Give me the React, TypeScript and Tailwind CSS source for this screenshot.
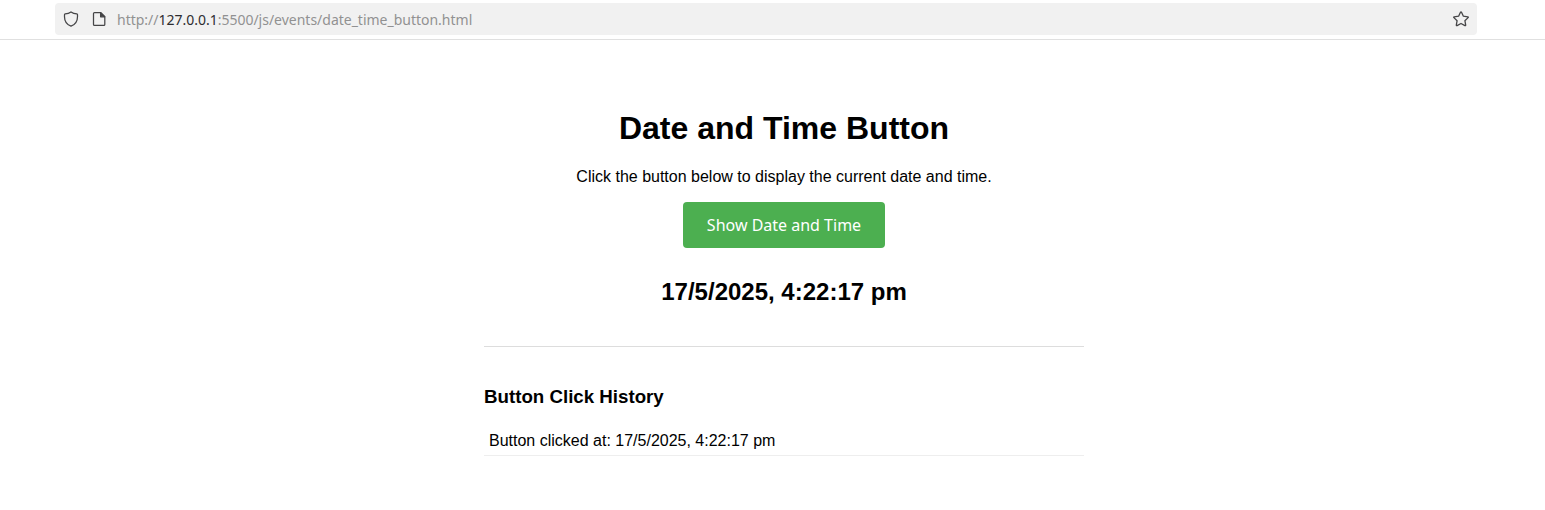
export default function App() {
  return (
    <div className="h-[510px] bg-white font-['Liberation_Sans',Arial,sans-serif] text-base text-black">
      <header className="h-10 border-b border-[#e0e0e0] pt-[3px] pr-[68px] pl-[55px]">
        <div className="flex h-8 items-center rounded bg-[#f1f1f1] px-2 text-[#454547]">
          <svg width="16" height="16" viewBox="0 0 16 16" fill="none" stroke="currentColor" strokeWidth="1.25" strokeLinejoin="round">
            <path d="M8 .9C6.200 2.100 4 2.700 2.200 2.900a.8.8 0 0 0-.7.8v2.100c0 4.300 2.800 8 6.500 9.400 3.700-1.400 6.500-5.100 6.500-9.400V3.700a.8.8 0 0 0-.7-.8C12 2.700 9.800 2.100 8 .9Z" />
          </svg>
          <svg className="ml-3" width="16" height="16" viewBox="0 0 16 16" fill="none" stroke="currentColor" strokeWidth="1.25" strokeLinejoin="round">
            <path d="M3.500 1.600h6.300l4 4v7.800a1 1 0 0 1-1 1H3.500a1 1 0 0 1-1-1V2.600a1 1 0 0 1 1-1Z" />
            <path d="M9.600 1.700v4.100h4.100Z" fill="currentColor" />
          </svg>
          <span className="ml-[10px] font-['Noto_Sans',sans-serif] text-[14px] tracking-[-0.01px] text-[#919192]">
            http://<span className="text-[#2d2d30]">127.0.0.1</span>:5500/js/events/date_time_button.html
          </span>
          <svg className="ml-auto" width="16" height="16" viewBox="0 0 16 16" fill="none" stroke="currentColor" strokeWidth="1.3" strokeLinejoin="round">
            <path d="M7.500 1.200q.5-.6 1 0l1.900 4 4.400.6q.8.2.3.8L11.900 9.700l.8 4.400q0 .9-.8.5L8 12.500l-3.900 2.100q-.8.4-.8-.5l.8-4.400L.9 6.600q-.5-.6.3-.8l4.400-.6Z" />
          </svg>
        </div>
      </header>
      <main className="ml-[484px] w-[600px] pt-[70px] text-center">
        <h1 className="text-[32px] leading-9 font-bold">Date and Time Button</h1>
        <p className="mt-[22px] leading-[18px]">Click the button below to display the current date and time.</p>
        <button className="mt-4 h-[46px] w-[202px] rounded bg-[#4caf50] font-['Noto_Sans',sans-serif] text-base text-white">Show Date and Time</button>
        <h2 className="mt-[30px] text-2xl leading-7 font-bold">17/5/2025, 4:22:17 pm</h2>
        <section className="mt-10 border-t border-[#dddddd] pt-[39px] text-left">
          <h3 className="text-[18.72px] leading-[22px] font-bold">Button Click History</h3>
          <ul className="mt-[19px]">
            <li className="border-b border-[#eeeeee] p-[5px] leading-[18px]">Button clicked at: 17/5/2025, 4:22:17 pm</li>
          </ul>
        </section>
      </main>
    </div>
  );
}
